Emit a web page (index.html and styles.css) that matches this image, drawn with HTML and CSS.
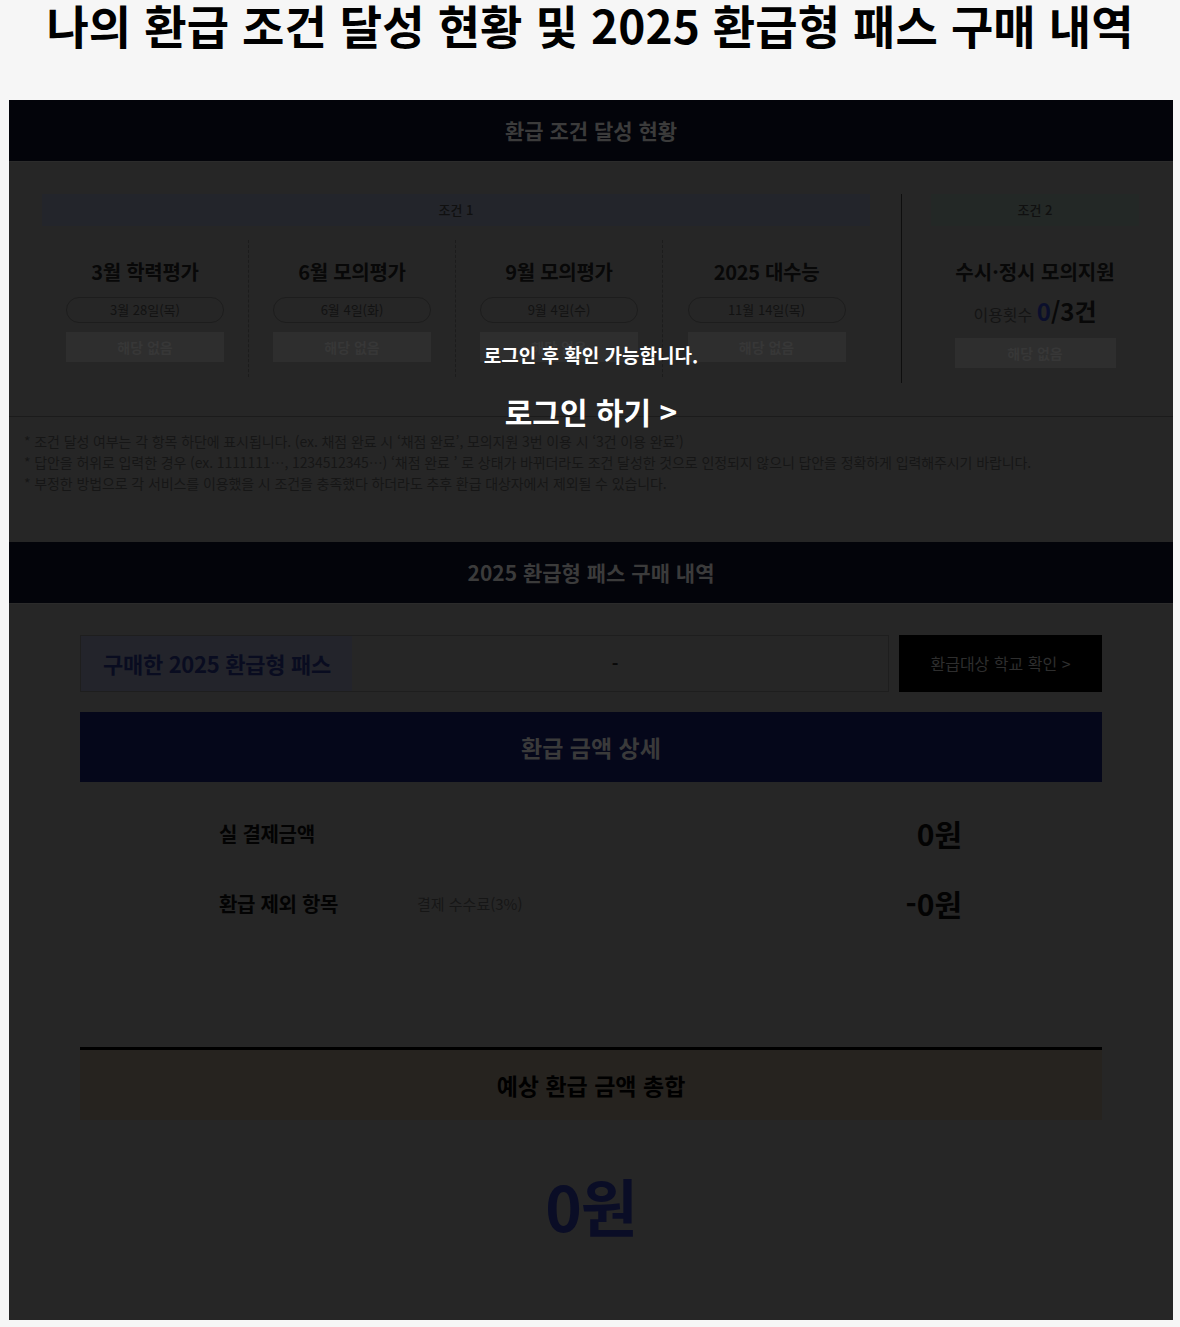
FILE: index.html
```html
<!DOCTYPE html>
<html lang="ko">
<head>
<meta charset="utf-8">
<title>나의 환급 조건 달성 현황</title>
<link rel="stylesheet" href="styles.css">
</head>
<body>
<h1 class="page-title">나의 환급 조건 달성 현황 및 2025 환급형 패스 구매 내역</h1>
<div class="board">
  <div class="sec-head">환급 조건 달성 현황</div>
  <div class="conds">
    <div class="cond1">
      <div class="cond-tag tag1">조건 1</div>
      <div class="exams">
        <div class="exam">
          <div class="exam-title">3월 학력평가</div>
          <div class="pill">3월 28일(목)</div>
          <div class="state">해당 없음</div>
        </div>
        <div class="exam">
          <div class="exam-title">6월 모의평가</div>
          <div class="pill">6월 4일(화)</div>
          <div class="state">해당 없음</div>
        </div>
        <div class="exam">
          <div class="exam-title">9월 모의평가</div>
          <div class="pill">9월 4일(수)</div>
          <div class="state">해당 없음</div>
        </div>
        <div class="exam">
          <div class="exam-title">2025 대수능</div>
          <div class="pill">11월 14일(목)</div>
          <div class="state">해당 없음</div>
        </div>
      </div>
    </div>
    <div class="vline"></div>
    <div class="cond2">
      <div class="cond-tag tag2">조건 2</div>
      <div class="exam-title c2-title">수시·정시 모의지원</div>
      <div class="count"><span class="count-label">이용횟수</span> <span class="count-num"><span class="navy">0</span>/3건</span></div>
      <div class="state state2">해당 없음</div>
    </div>
  </div>
  <div class="notes">
    <p>* 조건 달성 여부는 각 항목 하단에 표시됩니다. (ex. 채점 완료 시 ‘채점 완료’, 모의지원 3번 이용 시 ‘3건 이용 완료’)</p>
    <p>* 답안을 허위로 입력한 경우 (ex. 1111111…, 1234512345…) ‘채점 완료 ’ 로 상태가 바뀌더라도 조건 달성한 것으로 인정되지 않으니 답안을 정확하게 입력해주시기 바랍니다.</p>
    <p>* 부정한 방법으로 각 서비스를 이용했을 시 조건을 충족했다 하더라도 추후 환급 대상자에서 제외될 수 있습니다.</p>
  </div>
  <div class="sec-head">2025 환급형 패스 구매 내역</div>
  <div class="purchase">
    <div class="buy-row">
      <div class="buy-box">
        <div class="buy-label">구매한 2025 환급형 패스</div>
        <div class="buy-value">-</div>
      </div>
      <div class="school-btn">환급대상 학교 확인 &gt;</div>
    </div>
    <div class="detail-head">환급 금액 상세</div>
    <div class="detail-row">
      <div class="d-label">실 결제금액</div>
      <div class="d-sub"></div>
      <div class="d-val">0원</div>
    </div>
    <div class="detail-row">
      <div class="d-label">환급 제외 항목</div>
      <div class="d-sub">결제 수수료(3%)</div>
      <div class="d-val">-0원</div>
    </div>
    <div class="total-head">예상 환급 금액 총합</div>
    <div class="total-val">0원</div>
  </div>
  <div class="login-layer">
    <p class="login-msg">로그인 후 확인 가능합니다.</p>
    <p class="login-link">로그인 하기 &gt;</p>
  </div>
</div>
</body>
</html>
```
FILE: styles.css
```css
* { box-sizing: border-box; }
body {
  margin: 0;
  background: #f6f6f6;
  font-family: "Noto Sans CJK KR", "Noto Sans", sans-serif;
  color: #0c0c0c;
}
p { margin: 0; }
.page-title {
  margin: 0;
  font-size: 46px;
  line-height: 48px;
  font-weight: 700;
  text-align: center;
  color: #000;
  letter-spacing: 0.1px;
}
.board {
  position: relative;
  margin: 52px 7px 7px 9px;
  width: 1164px;
  background: #262626;
}
.sec-head {
  height: 62px;
  line-height: 61px;
  background: #03040a;
  border-bottom: 1px solid #2b2b2b;
  text-align: center;
  font-size: 21px;
  font-weight: 700;
  color: #3b3b3b;
}
.conds {
  display: flex;
  padding: 32px 34px 33px 33px;
  border-bottom: 1px solid #1b1b1b;
}
.cond1 { width: 828px; }
.vline {
  width: 1px;
  height: 189px;
  background: #0e0e0e;
  margin: 0 29px 0 31px;
}
.cond2 { flex: 1; text-align: center; }
.cond-tag {
  height: 32px;
  line-height: 32px;
  text-align: center;
  font-size: 13px;
  font-weight: 500;
  color: #101010;
}
.tag1 { background: #23252b; }
.tag2 { background: #232826; }
.exams {
  display: grid;
  grid-template-columns: repeat(4, 1fr);
  margin-top: 14px;
  height: 137px;
}
.exam {
  border-right: 1px dashed #1c1c1c;
  padding-top: 17px;
  text-align: center;
}
.exam:last-child { border-right: none; }
.exam-title {
  font-size: 20px;
  line-height: 30px;
  font-weight: 700;
  color: #080808;
  letter-spacing: -0.3px;
}
.pill {
  width: 158px;
  height: 26px;
  margin: 10px auto 0;
  border: 1px solid #1d1d1d;
  border-radius: 13px;
  font-size: 13px;
  line-height: 24px;
  color: #121212;
}
.state {
  width: 158px;
  height: 30px;
  margin: 9px auto 0;
  background: #2e2e2e;
  font-size: 14px;
  line-height: 30px;
  font-weight: 700;
  color: #373737;
}
.c2-title { margin-top: 31px; letter-spacing: 0; }
.count {
  margin-top: 9px;
  line-height: 30px;
}
.count-label { font-size: 16px; color: #141414; }
.count-num { font-size: 24px; font-weight: 700; color: #080808; }
.navy { color: #0b0f2c; }
.state2 { width: 161px; margin-top: 9px; }
.notes {
  padding: 14px 15px 48px;
  font-size: 14px;
  line-height: 21px;
  color: #161616;
  letter-spacing: -0.1px;
}
.purchase {
  padding: 31px 71px 75px;
}
.buy-row {
  display: flex;
  gap: 10px;
  height: 57px;
}
.buy-box {
  flex: 1;
  display: flex;
  border: 1px solid #1e1e1e;
}
.buy-label {
  width: 271px;
  background: #23242b;
  padding-left: 22px;
  font-size: 22px;
  font-weight: 700;
  line-height: 55px;
  color: #090c20;
  letter-spacing: -0.3px;
}
.buy-value {
  flex: 1;
  text-align: center;
  line-height: 55px;
  font-size: 18px;
  font-weight: 700;
  color: #080808;
  padding-right: 10px;
}
.school-btn {
  width: 203px;
  background: #000;
  text-align: center;
  line-height: 57px;
  font-size: 16px;
  color: #2e2e2e;
}
.detail-head {
  margin-top: 20px;
  height: 70px;
  line-height: 70px;
  background: #05071a;
  text-align: center;
  font-size: 23px;
  font-weight: 700;
  color: #3a3a3a;
}
.detail-row {
  display: flex;
  align-items: center;
  height: 70px;
  padding: 0 140px 0 139px;
}
.detail-head + .detail-row { margin-top: 16px; }
.d-label {
  width: 198px;
  font-size: 20px;
  font-weight: 700;
  color: #030303;
  letter-spacing: -0.3px;
}
.d-sub {
  flex: 1;
  font-size: 15px;
  color: #161616;
}
.d-val {
  font-size: 30px;
  font-weight: 700;
  color: #030303;
}
.total-head {
  margin-top: 109px;
  height: 73px;
  border-top: 3px solid #000;
  background: #26231f;
  text-align: center;
  line-height: 70px;
  font-size: 23px;
  font-weight: 700;
  color: #000;
}
.total-val {
  margin-top: 45px;
  line-height: 80px;
  text-align: center;
  font-size: 62px;
  font-weight: 700;
  color: #0a0d26;
  letter-spacing: -1px;
}
.login-layer {
  position: absolute;
  inset: 0;
  display: flex;
  flex-direction: column;
  align-items: center;
  padding-top: 242px;
  color: #fff;
}
.login-msg {
  font-size: 19px;
  line-height: 26px;
  font-weight: 700;
}
.login-link {
  margin-top: 23px;
  font-size: 30px;
  line-height: 40px;
  font-weight: 700;
}
```
